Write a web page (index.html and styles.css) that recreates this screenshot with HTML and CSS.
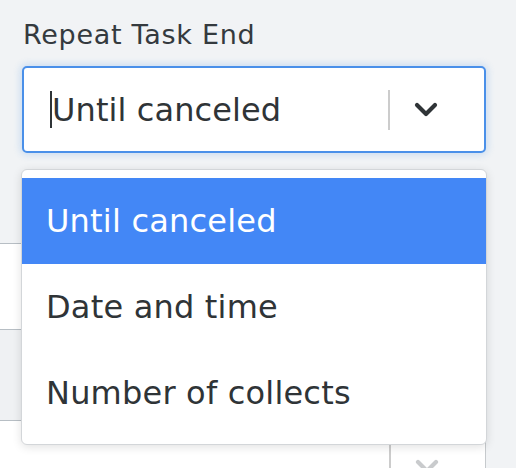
FILE: index.html
```html
<!DOCTYPE html>
<html lang="en">
<head>
<meta charset="utf-8">
<title>Repeat Task End</title>
<link rel="stylesheet" href="styles.css">
</head>
<body>
<div class="page">
  <div class="field">
    <label class="label">Repeat Task End</label>
    <div class="select focused">
      <div class="value"><span class="caret"></span>Until canceled</div>
      <span class="sep"></span>
      <div class="indicator">
        <svg width="24" height="16" viewBox="0 0 24 16"><path d="M3 3 L12 12 L21 3" fill="none" stroke="#2f3437" stroke-width="4.2" stroke-linecap="round" stroke-linejoin="round"/></svg>
      </div>
    </div>
  </div>

  <div class="rows">
    <div class="row r1"></div>
    <div class="row r2"></div>
    <div class="row r3"></div>
    <div class="row r4">
      <div class="select ghost">
        <div class="value"></div>
        <span class="sep"></span>
        <div class="indicator">
          <svg width="24" height="16" viewBox="0 0 24 16"><path d="M3 3 L12 12 L21 3" fill="none" stroke="#c9cbcd" stroke-width="4.2" stroke-linecap="round" stroke-linejoin="round"/></svg>
        </div>
      </div>
    </div>
  </div>

  <ul class="menu">
    <li class="option active">Until canceled</li>
    <li class="option">Date and time</li>
    <li class="option">Number of collects</li>
  </ul>
</div>
</body>
</html>
```

FILE: styles.css
```css
html, body {
  margin: 0;
  padding: 0;
  background: #f1f3f5;
  overflow: hidden;
}
body {
  font-family: "DejaVu Sans", "Noto Sans", sans-serif;
  color: #2f3437;
}
.page {
  position: relative;
  width: 516px;
  height: 468px;
  overflow: hidden;
}
.field {
  padding: 19px 30px 0 22px;
}
.label {
  display: block;
  font-size: 27px;
  line-height: 32px;
  letter-spacing: 0.7px;
  color: #343a3e;
  margin-left: 1px;
}
.select {
  display: flex;
  align-items: center;
  box-sizing: border-box;
  width: 464px;
  height: 87px;
  background: #fff;
  border-radius: 5px;
}
.select.focused {
  margin-top: 15px;
  border: 2px solid #4a90e9;
  box-shadow: 0 0 7px 2px rgba(74, 144, 226, 0.22);
}
.value {
  flex: 1;
  display: flex;
  align-items: center;
  padding-left: 26px;
  font-size: 32px;
  line-height: 40px;
  letter-spacing: 0.1px;
  color: #2f3437;
}
.caret {
  display: inline-block;
  width: 2px;
  height: 37px;
  background: #2f3437;
}
.sep {
  width: 2px;
  height: 40px;
  background: #cccccc;
}
.indicator {
  width: 94px;
  box-sizing: border-box;
  padding-left: 24px;
  display: flex;
  align-items: center;
}
.indicator svg {
  display: block;
}
.rows {
  margin-top: 5px;
  width: 486px;
}
.row {
  box-sizing: border-box;
  border-bottom: 1px solid #b7bec4;
}
.r1 { height: 86px; }
.r2 { height: 86px; background: #ffffff; }
.r3 { height: 91px; background: #eff1f3; }
.r4 {
  height: 47px;
  overflow: hidden;
  background: #ffffff;
  border-bottom: none;
  padding-left: 22px;
}
.select.ghost {
  border: 1px solid #c6cacd;
  border-top: none;
  border-left: none;
  width: 464px;
  height: 87px;
  border-radius: 0 0 4px 4px;
  align-items: flex-start;
  padding-top: 23px;
}
.select.ghost .indicator {
  padding-top: 15px;
}
.menu {
  position: absolute;
  top: 169px;
  left: 21px;
  width: 466px;
  box-sizing: border-box;
  margin: 0;
  padding: 8px 0;
  list-style: none;
  background: #fff;
  border: 1px solid #d3d6d9;
  border-radius: 6px;
  box-shadow: 0 2px 10px rgba(0, 0, 0, 0.12);
}
.option {
  height: 86px;
  display: flex;
  align-items: center;
  padding-left: 24px;
  font-size: 32px;
  line-height: 40px;
  letter-spacing: 0.2px;
  color: #2f3437;
}
.option.active {
  background: #4387f6;
  color: #ffffff;
}
```
